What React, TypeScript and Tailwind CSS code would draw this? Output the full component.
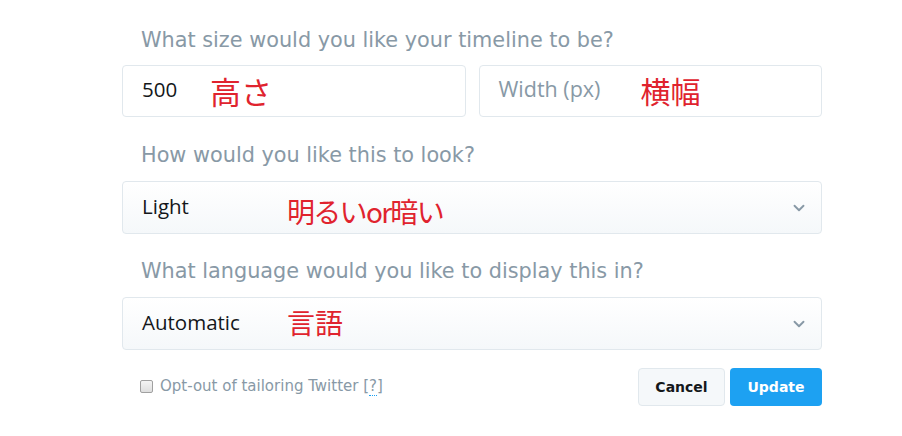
import { ChevronDown } from "lucide-react";

const label = "text-[20.8px] leading-[24px] text-[#8899a6]";
const note =
  "absolute leading-none text-[#e0232e] pointer-events-none";
const jp = { fontFamily: '"Noto Sans CJK JP", sans-serif' };
const sans = { fontFamily: '"Open Sans", sans-serif' };

function Select({ value, noteText, noteClass }: { value: string; noteText: string; noteClass: string }) {
  return (
    <div className="relative flex h-[53px] items-center justify-between rounded-[4px] border border-[#e1e8ed] bg-gradient-to-b from-white to-[#f5f8fa] pb-[3px] pl-[19px] pr-[13px]">
      <span className="text-[20.5px] text-[#14171a]" style={sans}>
        {value}
      </span>
      <ChevronDown className="mt-[3px] h-[18px] w-[18px] text-[#8899a6]" strokeWidth={2.5} />
      <span className={`${note} ${noteClass}`} style={jp}>
        {noteText}
      </span>
    </div>
  );
}

export default function App() {
  return (
    <div
      className="h-[436px] w-[902px] bg-white pl-[122px] pr-[80px] pt-[28px]"
      style={{ fontFamily: '"DejaVu Sans", Verdana, sans-serif' }}
    >
      <div className={`${label} pl-[19px]`}>What size would you like your timeline to be?</div>

      <div className="mt-[13px] flex gap-[13px]">
        <div className="relative flex h-[52px] flex-1 items-center rounded-[4px] border border-[#e1e8ed] pb-[3px] pl-[19px]">
          <span className="text-[20.5px] text-[#14171a]" style={sans}>
            500
          </span>
          <span className={`${note} left-[87px] top-[9px] text-[31px]`} style={jp}>
            高さ
          </span>
        </div>
        <div className="relative flex h-[52px] flex-1 items-center rounded-[4px] border border-[#e1e8ed] pb-[3px] pl-[19px]">
          <span className="text-[21.5px] text-[#8899a6]" style={sans}>
            Width (px)
          </span>
          <span className={`${note} left-[161px] top-[9px] text-[30px]`} style={jp}>
            横幅
          </span>
        </div>
      </div>

      <div className={`${label} mt-[26px] pl-[19px]`}>How would you like this to look?</div>
      <div className="mt-[14px]">
        <Select
          value="Light"
          noteText="明るいor暗い"
          noteClass="left-[164px] top-[15px] text-[28px] tracking-[-1.7px]"
        />
      </div>

      <div className={`${label} mt-[25px] pl-[19px]`}>What language would you like to display this in?</div>
      <div className="mt-[14px]">
        <Select value="Automatic" noteText="言語" noteClass="left-[164px] top-[10px] text-[28px]" />
      </div>

      <div className="mt-[18px] flex items-center justify-between">
        <label className="flex items-center gap-[7px] pb-[2px] pl-[18px] text-[15px] text-[#8899a6]">
          <span className="h-[13px] w-[13px] rounded-[2px] border border-[#a0a0a0] bg-gradient-to-b from-[#f4f4f4] to-[#dedede]" />
          <span>
            Opt-out of tailoring Twitter [
            <span className="border-b border-dotted border-[#1da1f2]">?</span>]
          </span>
        </label>
        <div className="flex gap-[5px]">
          <button className="h-[38px] w-[87px] rounded-[4px] border border-[#e1e8ed] bg-[#f5f8fa] text-[14px] font-bold text-[#14171a]">
            Cancel
          </button>
          <button className="h-[38px] w-[92px] rounded-[4px] bg-[#1da1f2] text-[14px] font-bold text-white">
            Update
          </button>
        </div>
      </div>
    </div>
  );
}
